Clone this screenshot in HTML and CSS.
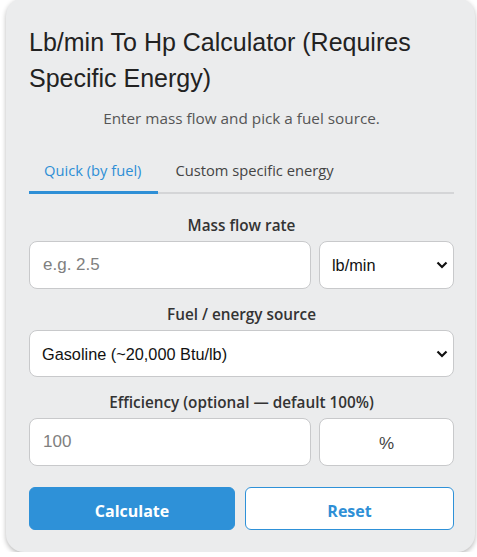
FILE: index.html
```html
<!DOCTYPE html>
<html lang="en">
<head>
<meta charset="utf-8">
<title>Lb/min To Hp Calculator</title>
<link rel="stylesheet" href="styles.css">
</head>
<body>
<div class="card">
  <h1 class="title">Lb/min To Hp Calculator (Requires Specific Energy)</h1>
  <p class="subtitle">Enter mass flow and pick a fuel source.</p>
  <div class="tabs">
    <button class="tab active">Quick (by fuel)</button>
    <button class="tab">Custom specific energy</button>
  </div>
  <div class="field first">
    <label class="label">Mass flow rate</label>
    <div class="row">
      <input class="input" type="text" placeholder="e.g. 2.5">
      <select class="select">
        <option>lb/min</option>
      </select>
    </div>
  </div>
  <div class="field">
    <label class="label">Fuel / energy source</label>
    <select class="select full">
      <option>Gasoline (~20,000 Btu/lb)</option>
    </select>
  </div>
  <div class="field">
    <label class="label">Efficiency (optional — default 100%)</label>
    <div class="row">
      <input class="input" type="text" placeholder="100">
      <div class="unit">%</div>
    </div>
  </div>
  <div class="actions">
    <button class="btn primary">Calculate</button>
    <button class="btn secondary">Reset</button>
  </div>
</div>
</body>
</html>
```
FILE: styles.css
```css
html, body {
  margin: 0;
  padding: 0;
  background: #ffffff;
}
body {
  font-family: "Open Sans", "Noto Sans", sans-serif;
}
.card {
  box-sizing: border-box;
  width: 469px;
  margin: -2px 0 0 6px;
  padding: 26px 21px 22px 23px;
  background: #ebeced;
  border-radius: 18px;
  box-shadow: 0 2px 5px rgba(0, 0, 0, 0.28);
}
.title {
  margin: 0;
  font-family: "Liberation Sans", Arial, sans-serif;
  font-weight: 400;
  font-size: 25px;
  line-height: 36px;
  color: #222;
}
.subtitle {
  margin: 12px 0 0;
  text-align: center;
  font-size: 15.3px;
  line-height: 20px;
  color: #555;
}
.tabs {
  display: flex;
  margin-top: 32px;
  border-bottom: 2px solid #d4d5d7;
}
.tab {
  border: 0;
  background: none;
  padding: 0 17px 11px 15px;
  margin-bottom: -2px;
  font-family: inherit;
  font-size: 14.7px;
  line-height: 20px;
  color: #444;
  border-bottom: 3px solid transparent;
  cursor: pointer;
}
.tab.active {
  color: #2e8fd6;
  border-bottom-color: #2e8fd6;
}
.tab + .tab {
  padding-left: 17px;
}
.field {
  margin-top: 15px;
}
.field.first {
  margin-top: 21px;
}
.label {
  display: block;
  text-align: center;
  font-weight: 600;
  font-size: 15.3px;
  line-height: 20px;
  color: #333;
  margin-bottom: 6px;
}
.row {
  display: flex;
  gap: 8px;
}
.input, .select, .unit {
  box-sizing: border-box;
  height: 48px;
  border: 1px solid #c8c9cb;
  border-radius: 8px;
  background: #fff;
  font-family: "Liberation Sans", Arial, sans-serif;
  font-size: 16.3px;
  color: #111;
}
.input {
  flex: 0 0 282px;
  padding: 0 13px;
  font-size: 17px;
  outline: none;
}
.input::placeholder {
  color: #808080;
}
.select {
  flex: 1;
  appearance: none;
  -webkit-appearance: none;
  background-image: url("data:image/svg+xml,%3Csvg xmlns='http://www.w3.org/2000/svg' width='12' height='8' viewBox='0 0 12 8'%3E%3Cpath d='M1.5 1.5 6 6l4.5-4.5' fill='none' stroke='%23111' stroke-width='2.2'/%3E%3C/svg%3E");
  background-repeat: no-repeat;
  background-position: right 5px center;
  padding: 0 10px 0 12px;
}
.select.full {
  width: 100%;
  height: 47px;
}
.unit {
  flex: 1;
  display: flex;
  align-items: center;
  justify-content: center;
  color: #444;
  font-size: 17px;
  padding-top: 4px;
}
.actions {
  display: flex;
  gap: 10px;
  margin-top: 21px;
}
.btn {
  box-sizing: border-box;
  height: 43px;
  border-radius: 6px;
  font-family: inherit;
  font-weight: 700;
  font-size: 16px;
  padding: 4px 0 0;
  cursor: pointer;
}
.btn.primary {
  flex: 0 0 206px;
  background: #2e91d8;
  border: 1px solid #2e91d8;
  color: #fff;
}
.btn.secondary {
  flex: 1;
  background: #fff;
  border: 1px solid #2e91d8;
  color: #2e8fd6;
}
```
